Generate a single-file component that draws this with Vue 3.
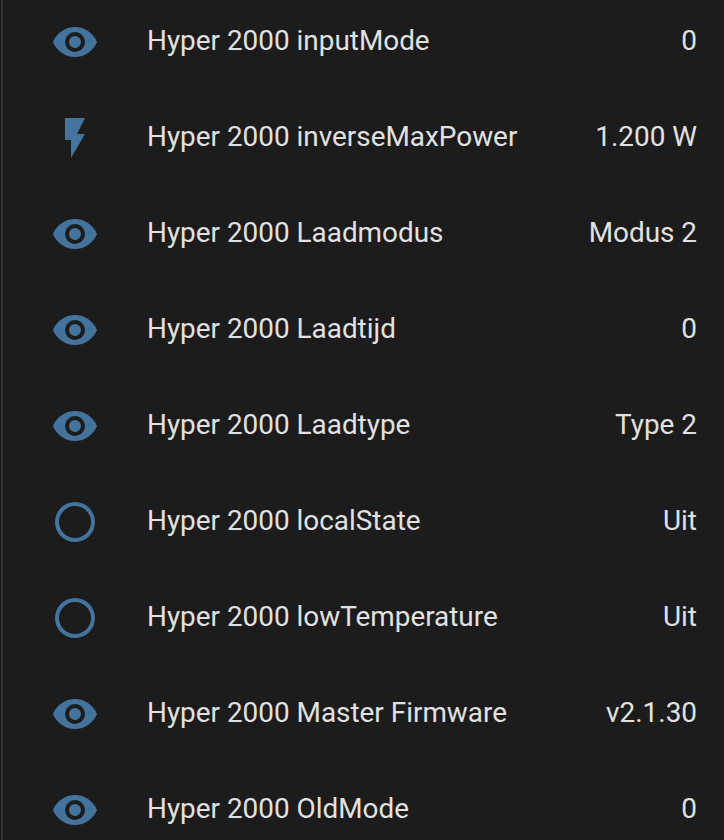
<script setup>
const icons = {
  eye: 'M12,9A3,3 0 0,0 9,12A3,3 0 0,0 12,15A3,3 0 0,0 15,12A3,3 0 0,0 12,9M12,17A5,5 0 0,1 7,12A5,5 0 0,1 12,7A5,5 0 0,1 17,12A5,5 0 0,1 12,17M12,4.5C7,4.5 2.73,7.61 1,12C2.73,16.39 7,19.5 12,19.5C17,19.5 21.27,16.39 23,12C21.27,7.61 17,4.5 12,4.5Z',
  flash: 'M7,2V13H10V22L17,10H13L17,2H7Z',
  circle: 'M12,20A8,8 0 0,1 4,12A8,8 0 0,1 12,4A8,8 0 0,1 20,12A8,8 0 0,1 12,20M12,2A10,10 0 0,0 2,12A10,10 0 0,0 12,22A10,10 0 0,0 22,12A10,10 0 0,0 12,2Z'
}
const rows = [
  { icon: 'eye', name: 'Hyper 2000 inputMode', value: '0' },
  { icon: 'flash', name: 'Hyper 2000 inverseMaxPower', value: '1.200 W' },
  { icon: 'eye', name: 'Hyper 2000 Laadmodus', value: 'Modus 2' },
  { icon: 'eye', name: 'Hyper 2000 Laadtijd', value: '0' },
  { icon: 'eye', name: 'Hyper 2000 Laadtype', value: 'Type 2' },
  { icon: 'circle', name: 'Hyper 2000 localState', value: 'Uit' },
  { icon: 'circle', name: 'Hyper 2000 lowTemperature', value: 'Uit' },
  { icon: 'eye', name: 'Hyper 2000 Master Firmware', value: 'v2.1.30' },
  { icon: 'eye', name: 'Hyper 2000 OldMode', value: '0' }
]
</script>

<template>
  <div class="card">
    <div class="list">
      <div v-for="row in rows" :key="row.name" class="row">
        <svg class="icon" viewBox="0 0 24 24" aria-hidden="true"><path :d="icons[row.icon]" /></svg>
        <span class="name">{{ row.name }}</span>
        <span class="value">{{ row.value }}</span>
      </div>
    </div>
  </div>
</template>

<style>
html, body { margin: 0; background: #1c1c1c; }
</style>

<style scoped>
.card {
  width: 723px;
  height: 840px;
  margin-left: 1px;
  box-sizing: border-box;
  overflow: hidden;
  background: #1c1c1c;
  border-left: 2px solid #333;
  padding: 0 27px 0 24px;
  font-family: Roboto, sans-serif;
  font-size: 27.9px;
  color: #e1e1e1;
}
.list {
  margin-top: -8px;
  display: flex;
  flex-direction: column;
}
.row {
  flex: 0 0 96px;
  height: 96px;
  display: flex;
  align-items: center;
}
.icon {
  flex: 0 0 48px;
  width: 48px;
  height: 48px;
  margin: 4px 24px 0 24px;
  fill: #44739e;
}
.name { margin-left: 24px; flex: 1; white-space: nowrap; }
.value { white-space: nowrap; }
</style>
